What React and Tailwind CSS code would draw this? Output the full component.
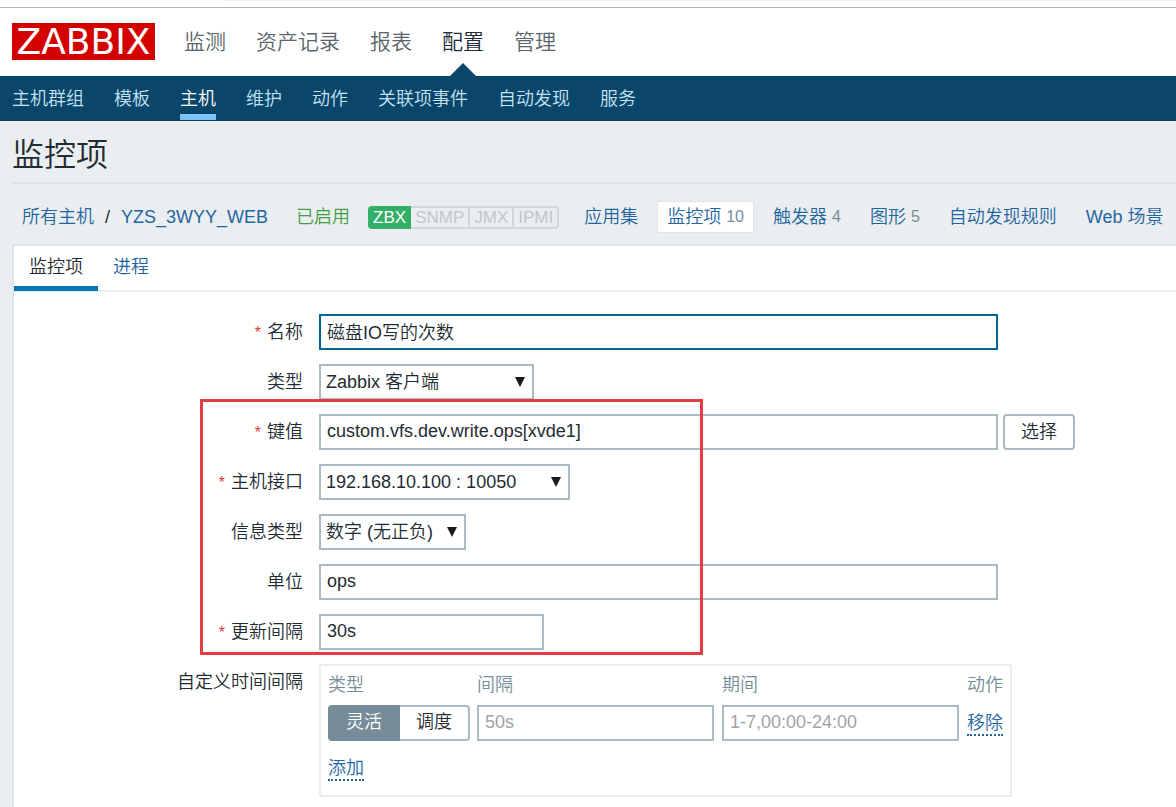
import { useState } from 'react';

const mainMenu = ['监测', '资产记录', '报表', '配置', '管理'];
const subMenu = ['主机群组', '模板', '主机', '维护', '动作', '关联项事件', '自动发现', '服务'];
const interfaces = ['SNMP', 'JMX', 'IPMI'];

const fieldClass =
  'h-9 max-w-full border-2 bg-white px-[6px] pb-[2px] text-[#1f2c33] outline-none placeholder:text-[#a3a3a3]';

function Header() {
  return (
    <header>
      <div className="mb-[6px] ml-56 h-px bg-[#eeeeee]" />
      <div className="flex h-[69px] items-stretch border-t border-[#b4b4b4] bg-white px-3">
        <a
          href="#"
          className="mt-[15px] flex h-[37px] w-[143px] items-center justify-center bg-[#d40000] font-['DejaVu_Sans',sans-serif] text-[36px] leading-none font-normal text-white"
        >
          ZABBIX
        </a>
        <nav className="ml-[29px] flex gap-[30px] text-[21px]">
          {mainMenu.map((item) => (
            <a
              key={item}
              href="#"
              className={`relative flex items-center ${item === '配置' ? 'text-[#1f2c33]' : 'text-[#5a646a]'}`}
            >
              {item}
              {item === '配置' && (
                <svg
                  className="absolute bottom-0 left-1/2 -translate-x-1/2"
                  width="26"
                  height="13"
                  viewBox="0 0 26 13"
                >
                  <path d="M0 13L13 0l13 13z" fill="#0a466a" />
                </svg>
              )}
            </a>
          ))}
        </nav>
      </div>
      <nav className="flex h-[45px] gap-[30px] bg-[#0a466a] px-3 pb-px">
        {subMenu.map((item) => (
          <a
            key={item}
            href="#"
            className={`flex items-center border-b-[6px] pt-2 ${
              item === '主机' ? 'border-[#7fc4f5] text-white' : 'border-transparent text-[#c3e2f5]'
            }`}
          >
            {item}
          </a>
        ))}
      </nav>
    </header>
  );
}

function ObjectLink({ label, count, selected }) {
  return (
    <a
      href="#"
      className={`flex h-8 items-center gap-[5px] text-[#1f65a0] ${
        selected ? 'border border-[#dfe4e7] bg-white px-[9px]' : 'px-[10px]'
      }`}
    >
      {label}
      {count && <span className="text-base text-[#768d99]">{count}</span>}
    </a>
  );
}

function HostBar() {
  return (
    <div className="flex items-center pt-[17px] pb-[11px] pl-[10px] whitespace-nowrap">
      <a href="#" className="text-[#1f65a0]">所有主机</a>
      <span className="mx-[11px]">/</span>
      <a href="#" className="text-[#1f65a0]">YZS_3WYY_WEB</a>
      <span className="ml-7 text-[#429e47]">已启用</span>
      <div className="ml-[18px] flex h-[23px] text-[17px] leading-[23px]">
        <span className="rounded-l-sm bg-[#34af67] px-[5px] text-white">ZBX</span>
        {interfaces.map((name) => (
          <span
            key={name}
            className="border-2 border-l-0 border-[#d0d6d9] px-1 leading-5 text-[#c0c7cb] last:rounded-r-sm"
          >
            {name}
          </span>
        ))}
      </div>
      <div className="ml-[15px] flex gap-[9px]">
        <ObjectLink label="应用集" />
        <ObjectLink label="监控项" count="10" selected />
        <ObjectLink label="触发器" count="4" />
        <ObjectLink label="图形" count="5" />
        <ObjectLink label="自动发现规则" />
        <ObjectLink label="Web 场景" />
      </div>
    </div>
  );
}

function FormRow({ label, htmlFor, required, children }) {
  return (
    <div className="flex">
      <div className="w-[289px] shrink-0 text-right leading-9">
        {required && <span className="mr-[6px] text-base text-[#e33734]">*</span>}
        <label htmlFor={htmlFor}>{label}</label>
      </div>
      <div className="ml-4 flex min-w-0 flex-1 gap-[5px]">{children}</div>
    </div>
  );
}

function Select({ id, value, className }) {
  return (
    <div className={`relative h-9 ${className}`}>
      <select
        id={id}
        className="h-9 w-full appearance-none border-2 border-[#acbbc2] bg-white px-[5px] text-[#1f2c33] outline-none"
      >
        <option>{value}</option>
      </select>
      <svg
        className="pointer-events-none absolute top-3 right-[9px]"
        width="10"
        height="11"
        viewBox="0 0 10 11"
      >
        <path d="M0 1h10L5 11z" fill="#1a1a1a" />
      </svg>
    </div>
  );
}

function CustomIntervals() {
  const [mode, setMode] = useState('灵活');

  return (
    <div className="w-[693px] border-2 border-[#ebeef0] px-[7px] pt-1 pb-[13px]">
      <table className="text-left">
        <thead className="text-[#768d99]">
          <tr className="h-[35px]">
            <th className="pb-1 font-[350]">类型</th>
            <th className="pb-1 font-[350]">间隔</th>
            <th className="pb-1 font-[350]">期间</th>
            <th className="pb-1 font-[350]">动作</th>
          </tr>
        </thead>
        <tbody>
          <tr>
            <td className="pr-[7px]">
              <div className="flex h-9 w-[142px]">
                {['灵活', '调度'].map((item) => (
                  <label
                    key={item}
                    className={`relative flex flex-1 items-center justify-center border-2 pb-[2px] first:rounded-l-sm last:rounded-r-sm ${
                      mode === item
                        ? 'border-[#768d99] bg-[#768d99] text-white'
                        : 'border-[#acbbc2] bg-white first:border-r-0 last:border-l-0'
                    }`}
                  >
                    <input
                      type="radio"
                      name="interval-type"
                      className="sr-only"
                      checked={mode === item}
                      onChange={() => setMode(item)}
                    />
                    {item}
                  </label>
                ))}
              </div>
            </td>
            <td className="pr-2">
              <input aria-label="间隔" placeholder="50s" className={`w-[237px] border-[#acbbc2] ${fieldClass}`} />
            </td>
            <td className="pr-2">
              <input
                aria-label="期间"
                placeholder="1-7,00:00-24:00"
                className={`w-[237px] border-[#acbbc2] ${fieldClass}`}
              />
            </td>
            <td>
              <button type="button" className="border-b-2 border-dotted border-[#1f65a0] leading-[22px] text-[#1f65a0]">
                移除
              </button>
            </td>
          </tr>
        </tbody>
      </table>
      <button type="button" className="mt-4 border-b-2 border-dotted border-[#1f65a0] leading-[22px] text-[#1f65a0]">
        添加
      </button>
    </div>
  );
}

function ItemForm() {
  return (
    <form className="flex flex-col gap-[14px] pt-[22px] pb-[10px]">
      <FormRow label="名称" htmlFor="name" required>
        <input id="name" defaultValue="磁盘IO写的次数" className={`w-[679px] border-[#006590] ${fieldClass}`} />
      </FormRow>
      <FormRow label="类型" htmlFor="type">
        <Select id="type" value="Zabbix 客户端" className="w-[215px]" />
      </FormRow>

      <div className="relative flex flex-col gap-[14px]">
        <FormRow label="键值" htmlFor="key" required>
          <input
            id="key"
            defaultValue="custom.vfs.dev.write.ops[xvde1]"
            className={`w-[679px] border-[#acbbc2] ${fieldClass}`}
          />
          <button type="button" className="h-9 w-[72px] rounded-sm border-2 border-[#acbbc2] bg-white">
            选择
          </button>
        </FormRow>
        <FormRow label="主机接口" htmlFor="interface" required>
          <Select id="interface" value="192.168.10.100 : 10050" className="w-[251px]" />
        </FormRow>
        <FormRow label="信息类型" htmlFor="value-type">
          <Select id="value-type" value="数字 (无正负)" className="w-[147px]" />
        </FormRow>
        <FormRow label="单位" htmlFor="units">
          <input id="units" defaultValue="ops" className={`w-[679px] border-[#acbbc2] ${fieldClass}`} />
        </FormRow>
        <FormRow label="更新间隔" htmlFor="delay" required>
          <input id="delay" defaultValue="30s" className={`w-[225px] border-[#acbbc2] ${fieldClass}`} />
        </FormRow>
        {/* highlight frame over the fields that matter */}
        <div className="pointer-events-none absolute -top-[15px] -bottom-[5px] left-[186px] w-[503px] border-3 border-[#e33e44]" />
      </div>

      <FormRow label="自定义时间间隔">
        <CustomIntervals />
      </FormRow>
    </form>
  );
}

export default function App() {
  return (
    <div className="min-h-screen bg-white font-['Liberation_Sans','Noto_Sans_CJK_SC',sans-serif] text-[18px] font-[350] text-[#1f2c33]">
      <Header />
      <main className="bg-[#ebeef0] pl-3">
        <h1 className="border-b-2 border-[#dfe4e7] pt-[10px] pb-[3px] text-[32px] leading-[48px]">监控项</h1>
        <HostBar />
        <div className="border-t-2 border-l-2 border-[#dfe4e7] bg-white">
          <div className="flex h-[46px] border-b-2 border-[#ebeef0]">
            <button type="button" className="h-[45px] border-b-[5px] border-[#0275b8] px-[15px] pt-[3px]">
              监控项
            </button>
            <button type="button" className="h-[45px] border-b-[5px] border-transparent px-[15px] pt-[3px] text-[#1f65a0]">
              进程
            </button>
          </div>
          <ItemForm />
        </div>
      </main>
    </div>
  );
}
